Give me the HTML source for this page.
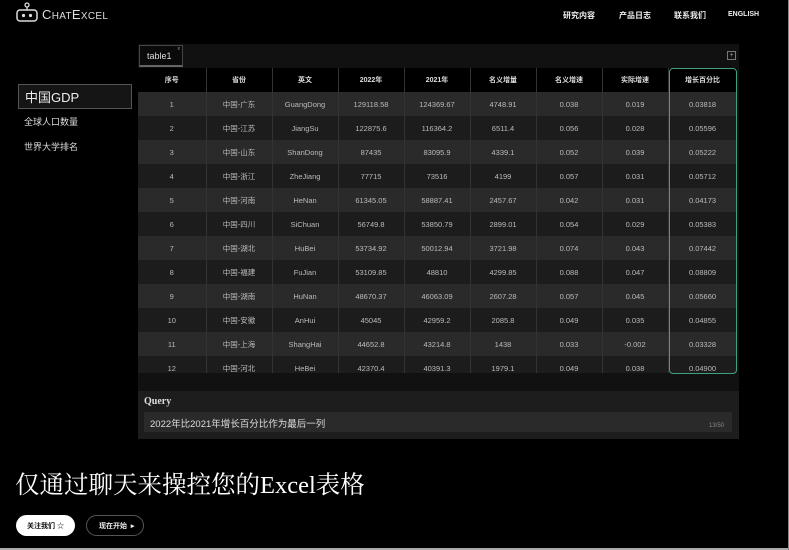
<!DOCTYPE html>
<html><head><meta charset="utf-8"><style>
*{margin:0;padding:0;box-sizing:border-box}
body{width:789px;height:550px;background:#000;position:relative;overflow:hidden;font-family:"Liberation Sans","Noto Sans CJK SC",sans-serif;color:#ddd}
.a{position:absolute}
.nav{top:10px;font-size:8px;font-weight:bold;color:#eee}
table{border-collapse:collapse;table-layout:fixed}
td{height:24px;text-align:center;font-size:7.5px;color:#bbb;border-right:1px solid #333}
tr.h td{height:24px;background:#000;color:#ddd;font-weight:bold;font-size:7px}
tr.o td{background:#2a2a2a}
tr.e td{background:#1c1c1c}
</style></head><body>
<svg class="a" style="left:16px;top:2px" width="22" height="20" viewBox="0 0 22 20"><circle cx="11" cy="3" r="2" fill="none" stroke="#ddd" stroke-width="1.3"/><line x1="11" y1="5" x2="11" y2="8" stroke="#ddd" stroke-width="1.3"/><rect x="1" y="8" width="20" height="11" rx="3" fill="none" stroke="#ddd" stroke-width="1.5"/><circle cx="7.5" cy="13.5" r="1.6" fill="#ddd"/><circle cx="14.5" cy="13.5" r="1.6" fill="#ddd"/></svg>
<div class="a" style="left:42px;top:7px;font-size:13px;color:#ddd;letter-spacing:.3px">C<span style="font-size:10px">HAT</span>E<span style="font-size:10px">XCEL</span></div>
<div class="a nav" style="left:563px">研究内容</div>
<div class="a nav" style="left:619px">产品日志</div>
<div class="a nav" style="left:674px">联系我们</div>
<div class="a nav" style="left:728px;top:11px;font-size:7px">ENGLISH</div>

<div class="a" style="left:18px;top:84px;width:114px;height:25px;border:1.5px solid #555;background:#151515;font-size:13px;color:#eee;padding:2px 0 0 6px">中国GDP</div>
<div class="a" style="left:24px;top:115px;font-size:9px;color:#ddd">全球人口数量</div>
<div class="a" style="left:24px;top:140px;font-size:9px;color:#ddd">世界大学排名</div>

<div class="a" style="left:138px;top:44px;width:601px;height:395px;background:#111"></div>
<div class="a" style="left:139px;top:45px;width:44px;height:22px;border:1px solid #444;border-bottom:2px solid #666;background:#0a0a0a;font-size:9px;color:#ddd;padding:5px 0 0 7px">table1<span style="position:absolute;right:2px;top:0;font-size:5px;color:#999">x</span></div>
<div class="a" style="left:727px;top:51px;width:9px;height:9px;border:1px solid #777;font-size:7px;line-height:7px;text-align:center;color:#999">+</div>
<div class="a" style="left:138px;top:68px;width:599px;height:305px;overflow:hidden">
<table style="width:599px">
<colgroup><col style="width:68px"><col style="width:66px"><col style="width:66px"><col style="width:66px"><col style="width:66px"><col style="width:66px"><col style="width:66px"><col style="width:66px"><col style="width:69px"></colgroup>
<tr class="h"><td>序号</td><td>省份</td><td>英文</td><td>2022年</td><td>2021年</td><td>名义增量</td><td>名义增速</td><td>实际增速</td><td>增长百分比</td></tr>
<tr class="o"><td>1</td><td>中国-广东</td><td>GuangDong</td><td>129118.58</td><td>124369.67</td><td>4748.91</td><td>0.038</td><td>0.019</td><td>0.03818</td></tr>
<tr class="e"><td>2</td><td>中国-江苏</td><td>JiangSu</td><td>122875.6</td><td>116364.2</td><td>6511.4</td><td>0.056</td><td>0.028</td><td>0.05596</td></tr>
<tr class="o"><td>3</td><td>中国-山东</td><td>ShanDong</td><td>87435</td><td>83095.9</td><td>4339.1</td><td>0.052</td><td>0.039</td><td>0.05222</td></tr>
<tr class="e"><td>4</td><td>中国-浙江</td><td>ZheJiang</td><td>77715</td><td>73516</td><td>4199</td><td>0.057</td><td>0.031</td><td>0.05712</td></tr>
<tr class="o"><td>5</td><td>中国-河南</td><td>HeNan</td><td>61345.05</td><td>58887.41</td><td>2457.67</td><td>0.042</td><td>0.031</td><td>0.04173</td></tr>
<tr class="e"><td>6</td><td>中国-四川</td><td>SiChuan</td><td>56749.8</td><td>53850.79</td><td>2899.01</td><td>0.054</td><td>0.029</td><td>0.05383</td></tr>
<tr class="o"><td>7</td><td>中国-湖北</td><td>HuBei</td><td>53734.92</td><td>50012.94</td><td>3721.98</td><td>0.074</td><td>0.043</td><td>0.07442</td></tr>
<tr class="e"><td>8</td><td>中国-福建</td><td>FuJian</td><td>53109.85</td><td>48810</td><td>4299.85</td><td>0.088</td><td>0.047</td><td>0.08809</td></tr>
<tr class="o"><td>9</td><td>中国-湖南</td><td>HuNan</td><td>48670.37</td><td>46063.09</td><td>2607.28</td><td>0.057</td><td>0.045</td><td>0.05660</td></tr>
<tr class="e"><td>10</td><td>中国-安徽</td><td>AnHui</td><td>45045</td><td>42959.2</td><td>2085.8</td><td>0.049</td><td>0.035</td><td>0.04855</td></tr>
<tr class="o"><td>11</td><td>中国-上海</td><td>ShangHai</td><td>44652.8</td><td>43214.8</td><td>1438</td><td>0.033</td><td>-0.002</td><td>0.03328</td></tr>
<tr class="e"><td>12</td><td>中国-河北</td><td>HeBei</td><td>42370.4</td><td>40391.3</td><td>1979.1</td><td>0.049</td><td>0.038</td><td>0.04900</td></tr>
</table></div>
<div class="a" style="left:669px;top:68px;width:68px;height:306px;border:1.5px solid #3fa07c;border-radius:4px"></div>
<div class="a" style="left:138px;top:391px;width:601px;height:48px;background:#1d1d1d"></div>
<div class="a" style="left:144px;top:396px;font-family:'Liberation Serif',serif;font-weight:bold;font-size:10px;color:#ddd">Query</div>
<div class="a" style="left:144px;top:412px;width:588px;height:20px;background:#2a2a2a;font-size:9.5px;color:#ddd;padding:4px 0 0 6px">2022年比2021年增长百分比作为最后一列</div>
<div class="a" style="left:709px;top:423px;font-size:6px;color:#888">13/50</div>

<div class="a" style="left:15px;top:466px;font-family:'Liberation Serif','Noto Serif CJK SC',serif;font-size:24.5px;color:#fff">仅通过聊天来操控您的Excel表格</div>
<div class="a" style="left:16px;top:515px;width:59px;height:21px;border-radius:11px;background:#fff;color:#111;font-size:7px;font-weight:bold;padding:6px 0 0 11px">关注我们 ☆</div>
<div class="a" style="left:86px;top:515px;width:58px;height:21px;border-radius:11px;border:1px solid #555;color:#eee;font-size:7px;font-weight:bold;padding:5px 0 0 12px">现在开始 &nbsp;▸</div>
<div class="a" style="left:0;top:548px;width:789px;height:2px;background:#aaa"></div>
<div class="a" style="left:788px;top:0;width:1px;height:550px;background:#888"></div>
</body></html>
